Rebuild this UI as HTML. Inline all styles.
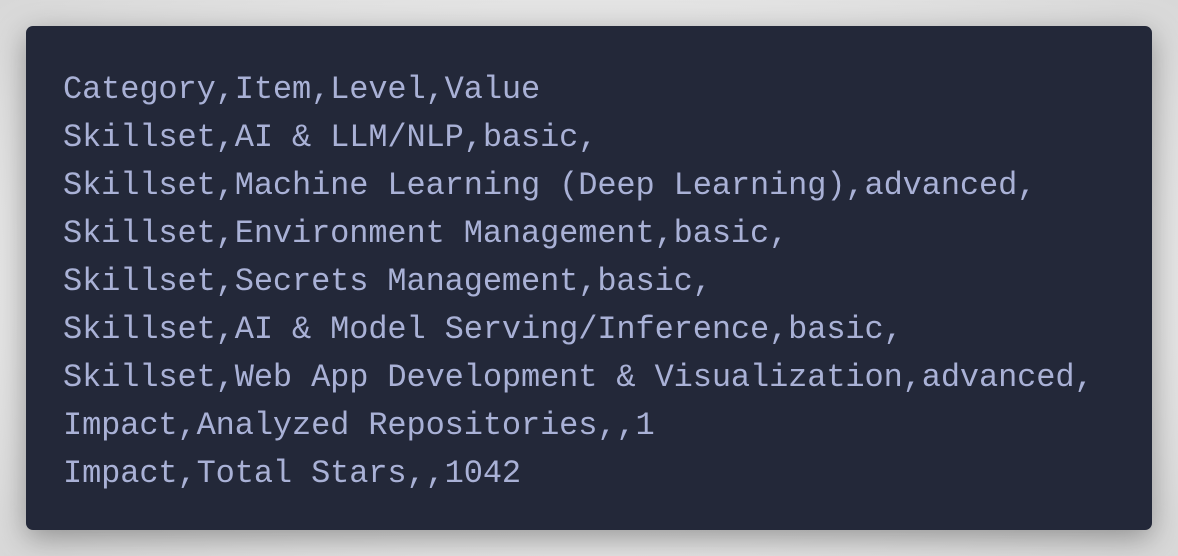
<!DOCTYPE html>
<html><head><style>
html,body{margin:0;padding:0;width:1178px;height:556px;overflow:hidden;background:#e6e6e6;}
body{background:radial-gradient(ellipse at center,#f2f2f2 0%,#e4e4e4 70%,#d8d8d8 100%);}
.card{position:absolute;left:26px;top:26px;width:1126px;height:504px;background:#232839;border-radius:7px;box-shadow:0 8px 30px rgba(0,0,0,0.35);}
pre{margin:0;position:absolute;left:37px;top:40px;font-family:"Liberation Mono",monospace;font-size:32px;letter-spacing:-0.12px;line-height:48px;color:#a9b1d6;}
</style></head><body>
<div class="card"><pre>Category,Item,Level,Value
Skillset,AI &amp; LLM/NLP,basic,
Skillset,Machine Learning (Deep Learning),advanced,
Skillset,Environment Management,basic,
Skillset,Secrets Management,basic,
Skillset,AI &amp; Model Serving/Inference,basic,
Skillset,Web App Development &amp; Visualization,advanced,
Impact,Analyzed Repositories,,1
Impact,Total Stars,,1042</pre></div>
</body></html>
